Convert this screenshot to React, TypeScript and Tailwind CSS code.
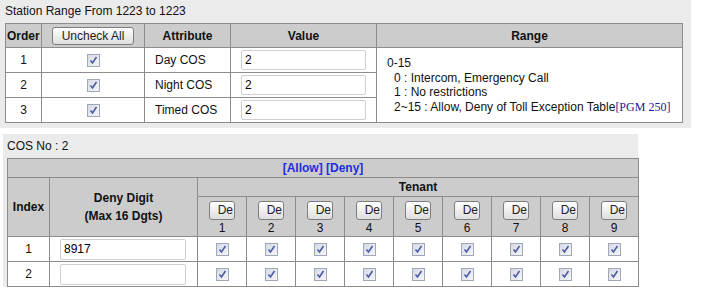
import React from 'react'

const font = { fontFamily: '"Liberation Sans", Arial, sans-serif' }

function Check() {
  return (
    <span className="inline-block align-middle w-[13px] h-[13px] border border-[#a0a7b5] bg-gradient-to-br from-[#d6dae4] to-[#f5f6f9]">
      <svg width="11" height="11" viewBox="0 0 11 11" className="block">
        <path d="M2.5 5.5 L4.5 8 L8.5 2" fill="none" stroke="#4a5ca8" strokeWidth="1.6" />
      </svg>
    </span>
  )
}

function Btn({ label, className }: { label: string; className: string }) {
  return (
    <button
      className={`border border-[#7d7d7d] rounded-[3px] bg-gradient-to-b from-white to-[#dedede] text-[12px] leading-none text-[#222] overflow-hidden whitespace-nowrap ${className}`}
    >
      {label}
    </button>
  )
}

function TextBox({ value, className }: { value: string; className: string }) {
  return (
    <div className={`border border-[#cfcfcf] rounded-[2px] bg-white text-[12px] leading-[18px] pl-[3px] text-black ${className}`}>
      {value}
    </div>
  )
}

export default function App() {
  const attrs = ['Day COS', 'Night COS', 'Timed COS']
  const tenants = [1, 2, 3, 4, 5, 6, 7, 8, 9]
  const cell = 'border border-[#8c8c8c]'
  const headBase = 'border border-[#8c8c8c] bg-[#cccccc] font-bold'
  const head = `${headBase} text-[#111]`

  return (
    <div className="w-[707px] h-[305px] bg-white text-[12px] text-[#111]" style={font}>
      {/* Station range panel */}
      <div className="w-[691px] h-[128px] bg-[#ebebeb] pl-[5px]">
        <div className="h-[23px] pt-[4px] leading-[14px]">Station Range From 1223 to 1223</div>
        <table className="border-collapse bg-white w-[677px] table-fixed">
          <colgroup>
            <col className="w-[36px]" />
            <col className="w-[103px]" />
            <col className="w-[86px]" />
            <col className="w-[146px]" />
            <col className="w-[306px]" />
          </colgroup>
          <tbody>
            <tr className="h-[24px]">
              <td className={`${head} pl-[1px]`}>Order</td>
              <td className={`${head} text-center`}>
                <Btn label="Uncheck All" className="w-[82px] h-[18px] align-middle font-normal" />
              </td>
              <td className={`${head} text-center`}>Attribute</td>
              <td className={`${head} text-center`}>Value</td>
              <td className={`${head} text-center`}>Range</td>
            </tr>
            {attrs.map((a, i) => (
              <tr key={a} className="h-[25px]">
                <td className={`${cell} text-center`}>{i + 1}</td>
                <td className={`${cell} text-center`}>
                  <Check />
                </td>
                <td className={`${cell} pl-[10px]`}>{a}</td>
                <td className={`${cell} pl-[10px]`}>
                  <TextBox value="2" className="w-[125px] h-[20px]" />
                </td>
                {i === 0 && (
                  <td rowSpan={3} className={`${cell} pl-[10px] align-middle leading-[14.5px]`}>
                    <div>0-15</div>
                    <div className="pl-[7px]">0 : Intercom, Emergency Call</div>
                    <div className="pl-[7px]">1 : No restrictions</div>
                    <div className="pl-[7px] whitespace-nowrap">
                      2~15 : Allow, Deny of Toll Exception Table
                      <span className="text-[#2020a0]" style={{ fontFamily: '"Liberation Serif", serif' }}>
                        [PGM 250]
                      </span>
                    </div>
                  </td>
                )}
              </tr>
            ))}
          </tbody>
        </table>
      </div>

      {/* COS panel */}
      <div className="mt-[6px] ml-[3px] w-[635px] bg-[#ebebeb] pl-[4px]">
        <div className="h-[24px] leading-[24px]">COS No : 2</div>
        <table className="border-collapse bg-white w-[631px] table-fixed">
          <colgroup>
            <col className="w-[42px]" />
            <col className="w-[148px]" />
            {tenants.map(t => (
              <col key={t} className="w-[49px]" />
            ))}
          </colgroup>
          <tbody>
            <tr className="h-[18px]">
              <td colSpan={11} className={`${headBase} text-center text-[#1d2ee0]`}>
                [Allow] [Deny]
              </td>
            </tr>
            <tr className="h-[18px]">
              <td rowSpan={2} className={`${head} text-center`}>Index</td>
              <td rowSpan={2} className={`${head} text-center leading-[18px]`}>
                Deny Digit
                <br />
                (Max 16 Dgts)
              </td>
              <td colSpan={9} className={`${head} text-center`}>Tenant</td>
            </tr>
            <tr className="h-[40px]">
              {tenants.map(t => (
                <td key={t} className="border border-[#8c8c8c] bg-[#cccccc] text-center leading-[14px]">
                  <Btn label="De" className="w-[26px] h-[19px] mt-[2px] text-right pr-[1px]" />
                  <div className="mt-[1px]">{t}</div>
                </td>
              ))}
            </tr>
            {['8917', ''].map((v, i) => (
              <tr key={i} className="h-[25px]">
                <td className={`${cell} text-center`}>{i + 1}</td>
                <td className={`${cell} pl-[10px]`}>
                  <TextBox value={v} className="w-[126px] h-[21px]" />
                </td>
                {tenants.map(t => (
                  <td key={t} className={`${cell} text-center`}>
                    <Check />
                  </td>
                ))}
              </tr>
            ))}
          </tbody>
        </table>
      </div>
    </div>
  )
}
